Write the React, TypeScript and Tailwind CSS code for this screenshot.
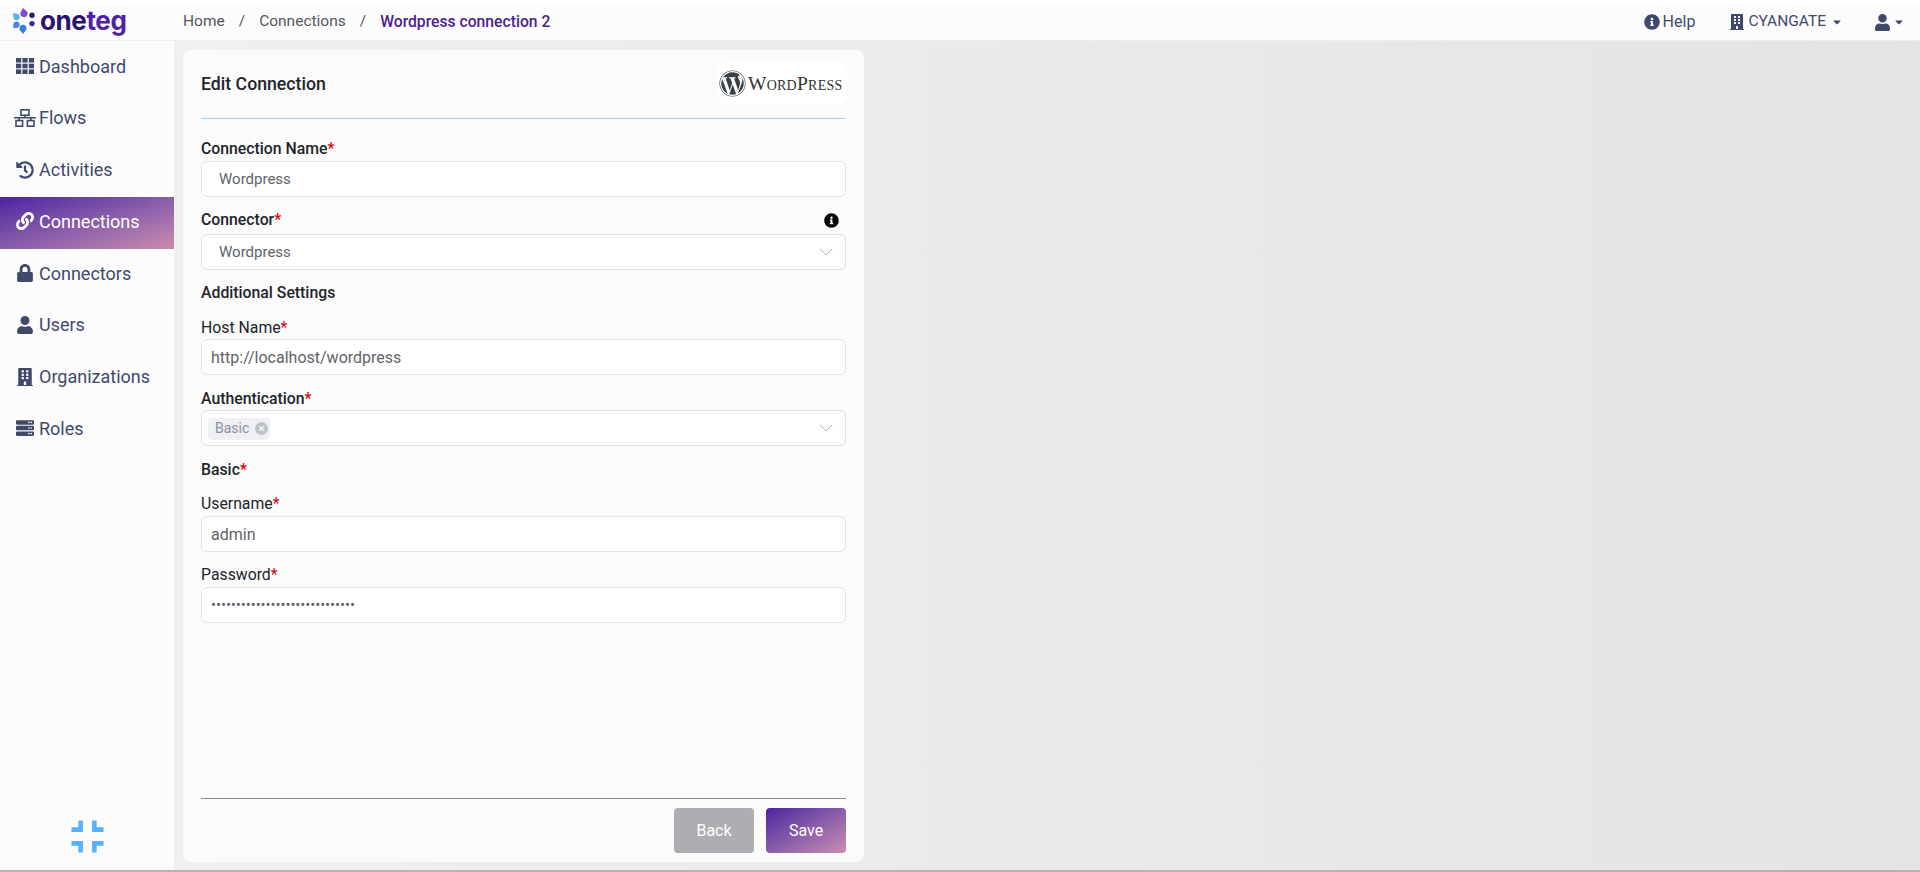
import {
  FaBuilding,
  FaCaretDown,
  FaHistory,
  FaInfoCircle,
  FaLink,
  FaLock,
  FaServer,
  FaTimes,
  FaUser,
  FaWordpress,
} from "react-icons/fa";
import { MdFullscreenExit } from "react-icons/md";
import { ChevronDown } from "lucide-react";
import type { ReactNode } from "react";

function GridIcon() {
  return (
    <svg width="18" height="16" viewBox="0 0 18 16" fill="currentColor">
      <rect x="0" y="0" width="5.2" height="4.6" />
      <rect x="6.4" y="0" width="5.2" height="4.6" />
      <rect x="12.8" y="0" width="5.2" height="4.6" />
      <rect x="0" y="5.7" width="5.2" height="4.6" />
      <rect x="6.4" y="5.7" width="5.2" height="4.6" />
      <rect x="12.8" y="5.7" width="5.2" height="4.6" />
      <rect x="0" y="11.4" width="5.2" height="4.6" />
      <rect x="6.4" y="11.4" width="5.2" height="4.6" />
      <rect x="12.8" y="11.4" width="5.2" height="4.6" />
    </svg>
  );
}

function FlowsIcon() {
  return (
    <svg width="22" height="18" viewBox="0 0 22 18" fill="none" stroke="currentColor" strokeWidth="1.6">
      <rect x="7" y="0.8" width="8" height="5.4" />
      <path d="M11 6v2.8M0 8.8h22M5.2 8.8v2.6M16.8 8.8v2.6" />
      <rect x="2" y="11.6" width="6.6" height="5.6" />
      <rect x="13.4" y="11.6" width="6.6" height="5.6" />
    </svg>
  );
}

const menu = [
  { label: "Dashboard", icon: <GridIcon /> },
  { label: "Flows", icon: <FlowsIcon /> },
  { label: "Activities", icon: <FaHistory size={18} /> },
  { label: "Connections", icon: <FaLink size={18} />, active: true },
  { label: "Connectors", icon: <FaLock size={18} /> },
  { label: "Users", icon: <FaUser size={18} /> },
  { label: "Organizations", icon: <FaBuilding size={18} /> },
  { label: "Roles", icon: <FaServer size={18} /> },
];

function Logo() {
  return (
    <div className="flex items-center gap-[4px]">
      <svg width="25" height="28" viewBox="0 0 25 28">
        <path d="M12 1 L15.5 4 A3.6 3.6 0 1 1 9.5 5.5 Z" fill="#7a4fd0" />
        <circle cx="21" cy="8.3" r="2.7" fill="#2a1a70" />
        <circle cx="21" cy="16.6" r="2.7" fill="#3b2a90" />
        <path d="M12 27 L8.8 23 A3.6 3.6 0 1 1 15.4 22.5 Z" fill="#3a7ae0" />
        <path d="M2 21 L2.5 16.5 A3.2 3.2 0 1 1 6.5 20.8 Z" fill="#4a80e8" />
        <path d="M2 6 L6.5 7 A3.2 3.2 0 1 1 2.5 11 Z" fill="#5ab0f5" />
      </svg>
      <span className="font-['Inter',sans-serif] text-[26px] font-bold leading-none tracking-[-0.4px]">
        <span className="text-[#2a1270]">one</span>
        <span className="text-[#5022a8]">teg</span>
      </span>
    </div>
  );
}

function Label({ children, className = "" }: { children: ReactNode; className?: string }) {
  return (
    <div className={`text-[15.8px] leading-[18px] text-[#212529] ${className}`}>
      {children}
      <span className="text-[#e00000]">*</span>
    </div>
  );
}

function TextBox({ value, className = "" }: { value: string; className?: string }) {
  return (
    <div className={`flex h-[36px] items-center rounded-[6px] border border-[#dfe0e8] bg-white text-[#5f6368] ${className}`}>
      {value}
    </div>
  );
}

function SelectBox({ children }: { children: ReactNode }) {
  return (
    <div className="flex h-[36px] items-center justify-between rounded-[6px] border border-[#dfe0e8] bg-white pr-[7px]">
      {children}
      <ChevronDown size={24} strokeWidth={0.7} className="text-[#9a9aa5]" />
    </div>
  );
}

export default function App() {
  return (
    <div className="flex h-[872px] flex-col border-b-2 border-[#b4b4b8] bg-gradient-to-r from-[#f1f1f1] to-[#e4e4e4] font-['Roboto',sans-serif]">
      <header className="flex h-[41px] shrink-0 items-center border-b border-t-2 border-b-[#eeeeee] border-t-white bg-[#fcfcfd] text-[15.5px]">
        <div className="w-[183px] pl-[11px]">
          <Logo />
        </div>
        <nav className="flex items-center gap-[14px] pt-[2px] text-[#55575c]">
          <span>Home</span>
          <span>/</span>
          <span>Connections</span>
          <span>/</span>
          <span className="text-[15.7px] font-medium text-[#4c1d95]">Wordpress connection 2</span>
        </nav>
        <div className="ml-auto flex items-center pr-[15px] pt-[2px] text-[15.5px] text-[#3f4a6b]">
          <FaInfoCircle size={16} className="mr-[3px]" />
          <span className="text-[16px]">Help</span>
          <FaBuilding size={16} className="ml-[34px] mr-[3px]" />
          <span>CYANGATE</span>
          <FaCaretDown size={12} className="ml-[5px]" />
          <FaUser size={17} className="ml-[31px]" />
          <FaCaretDown size={12} className="ml-[2px]" />
        </div>
      </header>

      <div className="flex min-h-0 flex-1">
        <aside className="flex w-[174px] shrink-0 flex-col bg-[#fcfcfd] text-[#3f4a6b]">
          <ul className="flex flex-col pt-[0.75px]">
            {menu.map((item) => (
              <li
                key={item.label}
                className={`flex h-[51.75px] items-center pb-[3px] text-[18px] ${
                  item.active
                    ? "bg-gradient-to-br from-[#4f1fa0] to-[#cc8cae] text-white"
                    : ""
                }`}
              >
                <span className="flex w-[39px] justify-center pl-[11px]">{item.icon}</span>
                <span>{item.label}</span>
              </li>
            ))}
          </ul>
          <div className="mt-auto flex justify-center pb-[6px]">
            <MdFullscreenExit size={55} className="text-[#55b0ff]" />
          </div>
        </aside>

        <main className="flex min-w-0 flex-1 pb-[8px] pl-[9px] pt-[9px]">
          <section className="flex w-[681px] flex-col rounded-[8px] bg-[#fbfbfc] px-[18px]">
            <div className="flex h-[69px] items-center justify-between border-b border-[#a3d4f7]">
              <h1 className="text-[17.7px] font-medium text-[#212529]">Edit Connection</h1>
              <div className="-mr-[1px] -mt-[1px] flex h-[43px] w-[130px] items-center gap-[2px] rounded-[12px] bg-white pl-[2px]">
                <FaWordpress size={27} className="text-[#3a3f44]" />
                <span className="font-['Liberation_Serif',serif] text-[19.5px] leading-none tracking-[0.25px] text-[#333333] [font-variant:small-caps]">
                  WordPress
                </span>
              </div>
            </div>

            <Label className="mt-[21px] font-medium">Connection Name</Label>
            <div className="mt-[3px]">
              <TextBox value="Wordpress" className="pl-[17px] text-[15px]" />
            </div>

            <div className="mt-[14px] flex items-center justify-between pr-[7px]">
              <Label className="font-medium">Connector</Label>
              <FaInfoCircle size={15} className="text-black" />
            </div>
            <div className="mt-[5px]">
              <SelectBox>
                <span className="pl-[17px] text-[15px] text-[#5f6368]">Wordpress</span>
              </SelectBox>
            </div>

            <div className="mt-[14px] text-[15.8px] leading-[18px] font-medium text-[#212529]">
              Additional Settings
            </div>

            <Label className="mt-[17px]">Host Name</Label>
            <div className="mt-[2px]">
              <TextBox value="http://localhost/wordpress" className="pl-[9px] pt-[2px] text-[16px]" />
            </div>

            <Label className="mt-[15px] font-medium">Authentication</Label>
            <div className="mt-[2px]">
              <SelectBox>
                <span className="ml-[6px] mt-[1px] flex h-[22px] items-center gap-[6px] rounded-[4px] bg-[#eff0f4] pl-[7px] pr-[2px] text-[14px] text-[#8d9099]">
                  Basic
                  <span className="flex h-[13px] w-[13px] items-center justify-center rounded-full bg-[#bfc2cb] text-white">
                    <FaTimes size={7} />
                  </span>
                </span>
              </SelectBox>
            </div>

            <Label className="mt-[15px] font-medium">Basic</Label>

            <Label className="mt-[16px]">Username</Label>
            <div className="mt-[3px]">
              <TextBox value="admin" className="pl-[9px] pt-[2px] text-[16px]" />
            </div>

            <Label className="mt-[14px]">Password</Label>
            <div className="mt-[3px]">
              <TextBox value="•••••••••••••••••••••••••••••" className="pl-[9px] text-[15px] tracking-[-0.1px]" />
            </div>

            <footer className="mt-auto flex justify-end gap-[12px] border-t border-[#8a8a8a] pb-[9px] pt-[9px]">
              <button className="h-[45px] w-[80px] rounded-[4px] bg-[#aeaeb2] text-[16px] text-white">
                Back
              </button>
              <button className="h-[45px] w-[80px] rounded-[4px] bg-gradient-to-br from-[#4f1fa0] to-[#cc8cae] text-[16px] text-white">
                Save
              </button>
            </footer>
          </section>
        </main>
      </div>
    </div>
  );
}
